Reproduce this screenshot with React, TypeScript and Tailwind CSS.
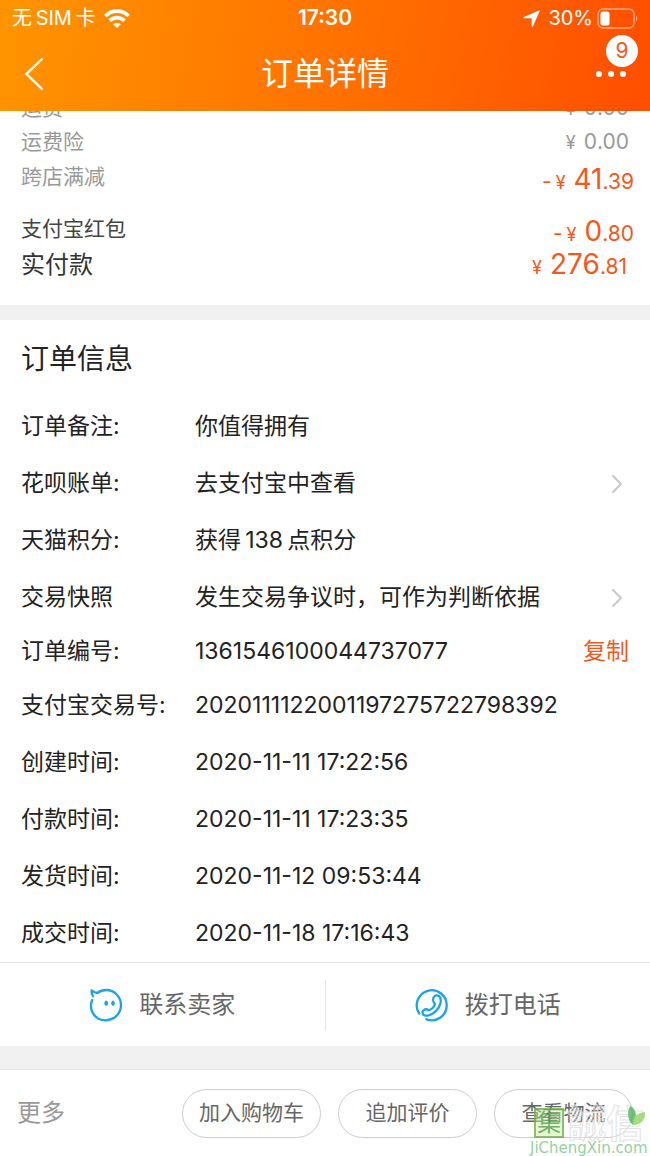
import { ChevronRight } from "lucide-react";
import { clsx } from "clsx";

type Price = {
  label: string;
  minus?: boolean;
  whole: string;
  cents: string;
  kind: "muted" | "discount" | "coupon" | "total";
};

type Info = {
  label: string;
  value: string;
  link?: boolean;
  copy?: boolean;
};

const prices: Price[] = [
  { label: "运费", whole: "0", cents: ".00", kind: "muted" },
  { label: "运费险", whole: "0", cents: ".00", kind: "muted" },
  { label: "跨店满减", minus: true, whole: "41", cents: ".39", kind: "discount" },
  { label: "支付宝红包", minus: true, whole: "0", cents: ".80", kind: "coupon" },
  { label: "实付款", whole: "276", cents: ".81", kind: "total" },
];

const infos: Info[] = [
  { label: "订单备注:", value: "你值得拥有" },
  { label: "花呗账单:", value: "去支付宝中查看", link: true },
  { label: "天猫积分:", value: "获得\u2009138\u2009点积分" },
  { label: "交易快照", value: "发生交易争议时，可作为判断依据", link: true },
  { label: "订单编号:", value: "1361546100044737077", copy: true },
  { label: "支付宝交易号:", value: "2020111122001197275722798392" },
  { label: "创建时间:", value: "2020-11-11 17:22:56" },
  { label: "付款时间:", value: "2020-11-11 17:23:35" },
  { label: "发货时间:", value: "2020-11-12 09:53:44" },
  { label: "成交时间:", value: "2020-11-18 17:16:43" },
];

const actions = ["加入购物车", "追加评价", "查看物流"];

const BackIcon = () => (
  <svg width="20" height="34" viewBox="0 0 20 34" fill="none" stroke="currentColor" strokeWidth="2.4">
    <path d="M18.500 1.500 2.500 17l16 15.500" />
  </svg>
);

const WifiIcon = () => (
  <svg width="26" height="19" viewBox="0 0 26 19" fill="none" stroke="currentColor" strokeWidth="3.6">
    <path d="M1.400 7a16.200 16.200 0 0 1 23.200 0" />
    <path d="M5.600 11.700a10.400 10.400 0 0 1 14.800 0" />
    <path d="M13 19 9.200 15.200a5.400 5.400 0 0 1 7.600 0z" fill="currentColor" stroke="none" />
  </svg>
);

const LocationIcon = () => (
  <svg width="17" height="17" viewBox="0 0 17 17" fill="currentColor">
    <path d="M15.800.4c.6-.3 1.100.2.8.8L10 16.200c-.3.8-1.300.7-1.300-.2V8.600c0-.2-.1-.3-.3-.3H1c-.9 0-1-1-.2-1.300z" />
  </svg>
);

const BatteryIcon = () => (
  <svg width="41" height="21" viewBox="0 0 41 21" fill="none">
    <rect x="1" y="1" width="36" height="19" rx="5" stroke="white" strokeOpacity="0.5" strokeWidth="1.5" />
    <rect x="3.5" y="3.5" width="9" height="14" rx="2.5" fill="white" />
    <path d="M39 7.500c1.600.8 1.600 5.200 0 6z" fill="white" fillOpacity="0.5" />
  </svg>
);

const ChatIcon = () => (
  <svg width="34" height="34" viewBox="0 0 34 34" fill="none" stroke="currentColor" strokeWidth="2.3" strokeLinecap="round" strokeLinejoin="round">
    <path d="M3.200 12 C1.200 17 1.700 22.200 4.600 26.200 C8 31 13.500 33 19 32 C26.500 30.800 32 24.500 32 17.200 C32 8.800 25.400 2 17.200 2 C13.800 2 10.800 3.100 8.300 5 C6.800 4.800 4.400 3.800 2.700 2.300 C2.400 4.500 2.800 6.500 4 8.200" />
    <ellipse cx="17.200" cy="15.300" rx="1.800" ry="2.700" fill="currentColor" stroke="none" />
    <ellipse cx="24" cy="15.300" rx="1.800" ry="2.700" fill="currentColor" stroke="none" />
  </svg>
);

const PhoneIcon = () => (
  <svg width="34" height="34" viewBox="0 0 34 34" fill="none" stroke="currentColor" strokeWidth="2.3" strokeLinecap="round" strokeLinejoin="round">
    <path d="M4.200 25.500A15 15 0 1 1 11.500 31.300" />
    <path d="M18.800 9c1.300-2.200 5.200-2.200 6.500.6 1.500 4-.5 9.700-4.300 13.300-3.600 3.400-8.200 5.300-11.300 4.600-2.400-.8-2.900-3.700-1.200-5.200 1.500-1.200 3.600-1.200 4.900 0 2.700-.8 5.700-3.300 6.600-6.300-1.900-1.800-2.400-5-1.200-7z" />
  </svg>
);

const LeafIcon = () => (
  <svg width="18" height="20" viewBox="0 0 18 20">
    <path d="M2 0c6 3 8 9 3 19C-1 14-1 6 2 0z" fill="#4fb35c" />
    <path d="M5 19c0-8 4-12 12-13 1 7-4 13-12 13z" fill="#8fd45f" />
  </svg>
);

const PriceRow = ({ label, minus, whole, cents, kind }: Price) => (
  <div
    className={clsx("flex items-center justify-between pl-[21px]", {
      "h-[34px] pr-[21px] text-[21px] text-[#999]": kind === "muted",
      "h-9 pr-4 text-[21px] text-[#999]": kind === "discount",
      "mt-4 h-9 pr-4 text-[21px] text-[#444]": kind === "coupon",
      "h-[35px] pr-[23px] text-2xl text-[#333]": kind === "total",
    })}
  >
    <dt>{label}</dt>
    <dd
      className={clsx("flex items-baseline text-[21px]", {
        "text-[#f4581c]": kind !== "muted",
        "pt-1": minus,
      })}
    >
      {minus && <span className="mr-1">-</span>}
      <span className="mr-2 text-lg">¥</span>
      <span className={clsx({ "text-[28px]": kind !== "muted" })}>{whole}</span>
      <span>{cents}</span>
    </dd>
  </div>
);

const InfoRow = ({ label, value, link, copy }: Info) => (
  <div
    className={clsx("flex items-center px-[21px] text-[23px] text-[#222]", {
      "h-[51px]": copy,
      "h-[57px]": !copy,
    })}
  >
    <dt className="w-[174px] shrink-0">{label}</dt>
    <dd className="flex flex-1 items-center justify-between whitespace-nowrap">
      <span>{value}</span>
      {link && (
        <button aria-label={value} className="-mr-1 text-[#c8c8c8]">
          <ChevronRight size={32} strokeWidth={1.5} />
        </button>
      )}
      {copy && <button className="text-[#f4581c]">复制</button>}
    </dd>
  </div>
);

const Watermark = () => (
  <div className="pointer-events-none absolute right-0 bottom-0 w-[120px] opacity-80">
    <div className="flex items-center">
      <span className="ml-1 flex size-[30px] items-center justify-center border-2 border-[#6fae4a] bg-[#c9eda0]/60 text-2xl text-[#4f9a4f]">
        集
      </span>
      <span className="ml-1 text-[38px] leading-[34px] font-bold text-white/40 [-webkit-text-stroke:1px_#dcdcdc]">
        誠信
      </span>
      <span className="absolute top-0 right-1">
        <LeafIcon />
      </span>
    </div>
    <div className="font-['DejaVu_Sans',sans-serif] text-[15px] leading-4 text-[#7cc58a]">
      JiChengXin.com
    </div>
  </div>
);

export default function App() {
  return (
    <div className="relative min-h-screen bg-white font-['Inter','Noto_Sans_CJK_SC',sans-serif]">
      <header className="relative z-10 bg-linear-[100deg,#ff9500,#ff7300_50%,#ff4e00] text-white">
        <div className="grid h-9 grid-cols-3 items-center px-3 text-xl">
          <div className="flex items-center gap-2">
            <span>{"无\u2009SIM\u2009卡"}</span>
            <WifiIcon />
          </div>
          <div className="text-center text-[21px] font-semibold">17:30</div>
          <div className="flex items-center justify-end gap-1">
            <LocationIcon />
            <span className="ml-1">30%</span>
            <BatteryIcon />
          </div>
        </div>
        <div className="flex h-[75px] items-center justify-between px-3">
          <button aria-label="返回" className="w-12 pl-3">
            <BackIcon />
          </button>
          <h1 className="text-[32px]">订单详情</h1>
          <button aria-label="更多" className="relative flex w-12 justify-end gap-[6px] pr-3">
            <span className="size-[6px] rounded-full bg-white" />
            <span className="size-[6px] rounded-full bg-white" />
            <span className="size-[6px] rounded-full bg-white" />
            <span className="absolute -top-9 right-0 flex size-8 items-center justify-center rounded-full bg-white text-[21px] text-[#f4581c]">
              9
            </span>
          </button>
        </div>
      </header>

      <main>
        <dl className="-mt-5 pb-[23px]">
          {prices.map((price) => (
            <PriceRow key={price.label} {...price} />
          ))}
        </dl>

        <section className="border-t-[15px] border-[#f1f1f1]">
          <h2 className="px-[21px] py-[17px] text-[28px] leading-[44px] text-[#222]">订单信息</h2>
          <dl>
            {infos.map((info) => (
              <InfoRow key={info.label} {...info} />
            ))}
          </dl>
        </section>

        <div className="flex h-[84px] items-center border-t border-[#e4e4e4] text-2xl text-[#666]">
          <button className="flex flex-1 items-center justify-center gap-4">
            <span className="text-[#1ba3e6]">
              <ChatIcon />
            </span>
            联系卖家
          </button>
          <span className="h-[50px] w-px bg-[#e4e4e4]" />
          <button className="flex flex-1 items-center justify-center gap-4">
            <span className="text-[#1ba3e6]">
              <PhoneIcon />
            </span>
            拨打电话
          </button>
        </div>
      </main>

      <footer className="border-t-[23px] border-[#f1f1f1]">
        <div className="flex h-[87px] items-center justify-between border-t border-[#e4e4e4] px-[17px]">
          <button className="text-2xl text-[#999]">更多</button>
          <div className="flex gap-[17px]">
            {actions.map((action) => (
              <button
                key={action}
                className="h-[49px] w-[139px] rounded-full border border-[#ccc] text-[21px] text-[#666]"
              >
                {action}
              </button>
            ))}
          </div>
        </div>
      </footer>
      <Watermark />
    </div>
  );
}
